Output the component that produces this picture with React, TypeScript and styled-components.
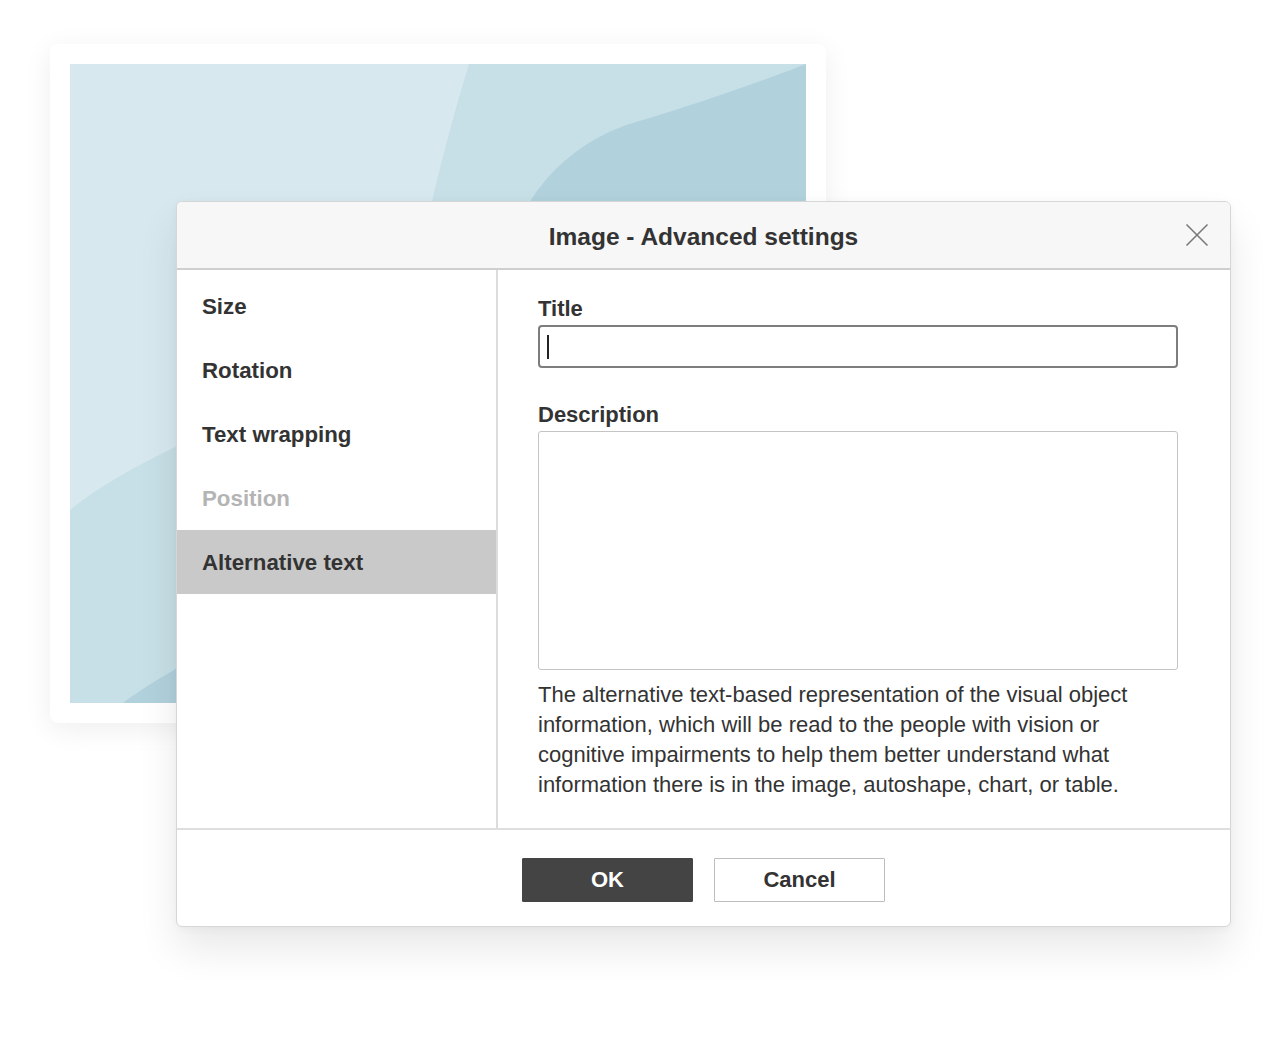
import React from 'react';
import styled, { createGlobalStyle } from 'styled-components';

const GlobalStyle = createGlobalStyle`
  html, body {
    margin: 0;
    padding: 0;
    background: #ffffff;
  }
  body {
    font-family: 'Liberation Sans', Arial, Helvetica, sans-serif;
    color: #333333;
  }
`;

const Stage = styled.div`
  display: grid;
  width: 1280px;
  height: 1040px;
  overflow: hidden;
`;

const BackCard = styled.div`
  grid-area: 1 / 1;
  align-self: start;
  justify-self: start;
  margin: 44px 0 0 50px;
  width: 736px;
  height: 639px;
  padding: 20px;
  background: #ffffff;
  border-radius: 8px;
  box-shadow: 0 6px 28px rgba(0, 0, 0, 0.07);
`;

const Picture = styled.svg`
  display: block;
  width: 736px;
  height: 639px;
`;

const Dialog = styled.div`
  grid-area: 1 / 1;
  align-self: start;
  justify-self: start;
  margin: 201px 0 0 176px;
  width: 1053px;
  height: 724px;
  display: flex;
  flex-direction: column;
  background: #ffffff;
  border: 1px solid #d6d6d6;
  border-radius: 6px;
  overflow: hidden;
  box-shadow: 0 22px 40px rgba(0, 0, 0, 0.09), 0 2px 8px rgba(0, 0, 0, 0.04);
`;

const Header = styled.div`
  display: grid;
  grid-template-columns: 1fr auto 1fr;
  align-items: center;
  height: 66px;
  padding: 0 21px;
  background: #f7f7f7;
  border-bottom: 2px solid #cfcfcf;
  flex-shrink: 0;
`;

const HeaderTitle = styled.div`
  grid-column: 2;
  font-size: 24.5px;
  font-weight: 700;
  color: #333333;
  padding-top: 4px;
`;

const CloseButton = styled.div`
  grid-column: 3;
  justify-self: end;
  display: flex;
  width: 24px;
  height: 24px;
  align-items: center;
  justify-content: center;
`;

const Body = styled.div`
  display: flex;
  flex: 1;
  min-height: 0;
`;

const Nav = styled.div`
  width: 319px;
  padding-top: 4px;
  border-right: 2px solid #dcdcdc;
  flex-shrink: 0;
`;

const NavItem = styled.div<{ $active?: boolean; $disabled?: boolean }>`
  height: 64px;
  display: flex;
  align-items: center;
  padding: 2px 0 0 25px;
  box-sizing: border-box;
  font-size: 22.3px;
  font-weight: 700;
  color: ${(p) => (p.$disabled ? '#b4b4b4' : '#333333')};
  background: ${(p) => (p.$active ? '#c9c9c9' : 'transparent')};
`;

const Content = styled.div`
  flex: 1;
  padding: 26px 52px 0 40px;
`;

const Label = styled.div<{ $spaced?: boolean }>`
  font-size: 22px;
  font-weight: 700;
  line-height: 26px;
  color: #333333;
  margin-top: ${(p) => (p.$spaced ? '34px' : '0')};
  margin-bottom: 3px;
`;

const TitleInput = styled.div`
  box-sizing: border-box;
  height: 43px;
  width: 640px;
  border: 2px solid #7d7d7d;
  border-radius: 4px;
  display: flex;
  align-items: center;
  padding-left: 7px;
`;

const Caret = styled.span`
  display: block;
  width: 2px;
  height: 24px;
  background: #222222;
`;

const DescriptionArea = styled.div`
  box-sizing: border-box;
  height: 239px;
  width: 640px;
  border: 1px solid #c4c4c4;
  border-radius: 3px;
`;

const Help = styled.p`
  margin: 10px 0 0;
  width: 640px;
  font-size: 22px;
  line-height: 30px;
  color: #333333;
`;

const Footer = styled.div`
  height: 98px;
  flex-shrink: 0;
  border-top: 2px solid #dedede;
  display: flex;
  align-items: center;
  justify-content: center;
  gap: 21px;
  padding-top: 3px;
  box-sizing: border-box;
`;

const Button = styled.div<{ $primary?: boolean }>`
  box-sizing: border-box;
  width: 171px;
  height: 44px;
  display: flex;
  align-items: center;
  justify-content: center;
  font-size: 22px;
  font-weight: 700;
  border-radius: 1px;
  background: ${(p) => (p.$primary ? '#444444' : '#ffffff')};
  color: ${(p) => (p.$primary ? '#ffffff' : '#333333')};
  border: 1px solid ${(p) => (p.$primary ? '#444444' : '#bdbdbd')};
`;

const navItems = [
  { label: 'Size' },
  { label: 'Rotation' },
  { label: 'Text wrapping' },
  { label: 'Position', disabled: true },
  { label: 'Alternative text', active: true },
];

export default function App() {
  return (
    <>
      <GlobalStyle />
      <Stage>
        <BackCard>
          <Picture viewBox="0 0 736 639" preserveAspectRatio="none">
            <rect width="736" height="639" fill="#d7e9ef" />
            <path
              d="M399 0 C 385 45, 372 95, 362 137 C 340 230, 230 320, 105 383 C 60 405, 25 425, 0 446 L 0 639 L 736 639 L 736 0 Z"
              fill="#c7dfe6"
            />
            <path
              d="M736 0 C 700 14, 640 36, 563 59 C 520 72, 485 100, 463 133 C 380 260, 300 470, 150 580 C 110 602, 75 622, 53 639 L 736 639 Z"
              fill="#b1d1dd"
            />
          </Picture>
        </BackCard>

        <Dialog>
          <Header>
            <HeaderTitle>Image - Advanced settings</HeaderTitle>
            <CloseButton>
              <svg width="24" height="24" viewBox="0 0 24 24">
                <path d="M1.5 1.5 L22.5 22.5 M22.5 1.5 L1.5 22.5" stroke="#7a7a7a" strokeWidth="1.6" />
              </svg>
            </CloseButton>
          </Header>

          <Body>
            <Nav>
              {navItems.map((item) => (
                <NavItem key={item.label} $active={item.active} $disabled={item.disabled}>
                  {item.label}
                </NavItem>
              ))}
            </Nav>

            <Content>
              <Label>Title</Label>
              <TitleInput>
                <Caret />
              </TitleInput>

              <Label $spaced>Description</Label>
              <DescriptionArea />

              <Help>
                The alternative text-based representation of the visual object information, which will be
                read to the people with vision or cognitive impairments to help them better understand what
                information there is in the image, autoshape, chart, or table.
              </Help>
            </Content>
          </Body>

          <Footer>
            <Button $primary>OK</Button>
            <Button>Cancel</Button>
          </Footer>
        </Dialog>
      </Stage>
    </>
  );
}
